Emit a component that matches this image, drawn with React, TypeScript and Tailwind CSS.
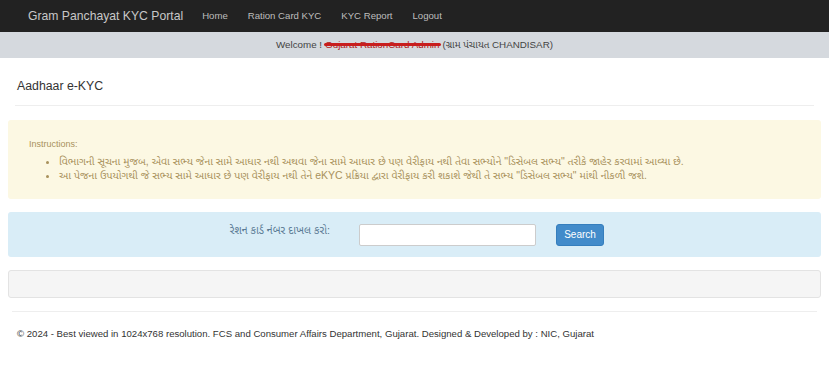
const navLinks = ['Home', 'Ration Card KYC', 'KYC Report', 'Logout'];

const instructions = [
  'વિભાગની સૂચના મુજબ, એવા સભ્ય જેના સામે આધાર નથી અથવા જેના સામે આધાર છે પણ વેરીફાય નથી તેવા સભ્યોને "ડિસેબલ સભ્ય" તરીકે જાહેર કરવામાં આવ્યા છે.',
  'આ પેજના ઉપયોગથી જે સભ્ય સામે આધાર છે પણ વેરીફાય નથી તેને eKYC પ્રક્રિયા દ્વારા વેરીફાય કરી શકાશે જેથી તે સભ્ય "ડિસેબલ સભ્ય" માંથી નીકળી જશે.',
];

const font = "font-['Liberation_Sans','Noto_Sans_Gujarati','Noto_Sans',sans-serif]";

export default function App() {
  return (
    <div className={`w-[829px] h-[370px] overflow-hidden bg-white text-[#333] ${font}`}>
      {/* Navbar */}
      <nav className="h-8 bg-[#222] flex items-center pl-[28px]">
        <span className="text-[12.2px] text-[#c8c8c8] mr-[19px]">Gram Panchayat KYC Portal</span>
        <div className="flex gap-[20px]">
          {navLinks.map((l) => (
            <span key={l} className="text-[9.6px] text-[#bdbdbd]">{l}</span>
          ))}
        </div>
      </nav>

      {/* Welcome bar */}
      <div className="h-[26px] bg-[#d5d9de] flex items-center justify-center text-[9.8px] text-[#444]">
        <span>Welcome ! </span>
        <span className="relative mx-[3px] text-[#b02020]">
          Gujarat RationCard Admin
          <span className="absolute -left-[1px] -right-[2px] top-[5px] h-[3px] bg-[#c81e1e] rounded-full" />
        </span>
        <span>(ગ્રામ પંચાયત CHANDISAR)</span>
      </div>

      {/* Page heading */}
      <div className="px-[15px] pt-[20px]">
        <h2 className="text-[12.3px] text-[#333] pl-[2px] leading-[16px]">Aadhaar e-KYC</h2>
        <div className="mt-[11px] h-px bg-[#eee]" />
      </div>

      <div className="px-[8px] pt-[14px]">
        {/* Instructions */}
        <div className="h-[79px] bg-[#fcf8e3] rounded-[3px] pl-[21px] pt-[18px] text-[#a8915c]">
          <div className="text-[9px] leading-[12px]">Instructions:</div>
          <ul className="mt-[4px] pl-[30px] list-disc text-[10.5px] leading-[14px]">
            {instructions.map((t) => (
              <li key={t}>{t}</li>
            ))}
          </ul>
        </div>

        {/* Search panel */}
        <div className="mt-[13px] h-[45px] bg-[#d9edf7] rounded-[3px] flex items-center">
          <div className="w-[322px] text-right text-[10.7px] text-[#5a7a94] -mt-[8px]">રેશન કાર્ડ નંબર દાખલ કરો:</div>
          <input
            className="ml-[29px] w-[177px] h-[22px] bg-white border border-[#ccc] rounded-[2px] outline-none"
            type="text"
          />
          <button className="ml-[20px] w-[48px] h-[22px] bg-[#428bca] border border-[#357ebd] rounded-[3px] text-[10px] text-white">
            Search
          </button>
        </div>

        {/* Result panel */}
        <div className="mt-[13px] h-[28px] bg-[#f5f5f5] border border-[#e3e3e3] rounded-[3px]" />
      </div>

      {/* Footer */}
      <div className="px-[12px] pt-[13px]">
        <div className="h-px bg-[#eee]" />
        <p className="mt-[15px] pl-[5px] text-[9.6px] text-[#333]">
          © 2024 - Best viewed in 1024x768 resolution. FCS and Consumer Affairs Department, Gujarat. Designed &amp; Developed by : NIC, Gujarat
        </p>
      </div>
    </div>
  );
}
